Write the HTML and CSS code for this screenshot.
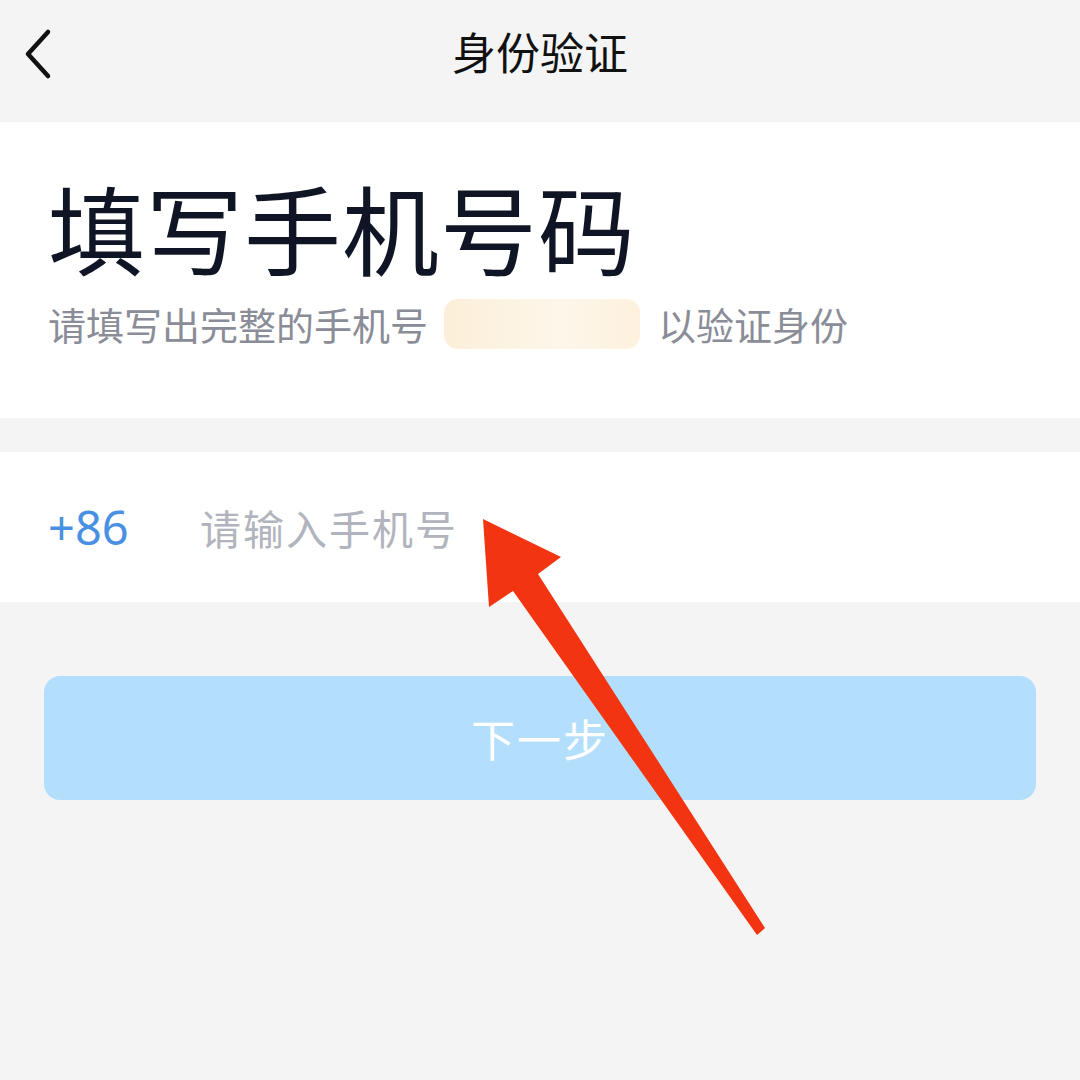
FILE: index.html
```html
<!DOCTYPE html>
<html lang="zh-CN">
<head>
<meta charset="utf-8">
<link rel="stylesheet" href="styles.css">
</head>
<body>
<div class="page">
  <header class="nav">
    <svg class="back" width="30" height="52" viewBox="0 0 30 52"><polyline points="24,4 4,26 24,48" fill="none" stroke="#111" stroke-width="4.5" stroke-linecap="round" stroke-linejoin="round"/></svg>
    <div class="nav-title">身份验证</div>
  </header>
  <section class="intro">
    <h1 class="title">填写手机号码</h1>
    <p class="sub">请填写出完整的手机号<span class="mask"></span>以验证身份</p>
  </section>
  <section class="phone-row">
    <span class="code">+86</span>
    <span class="placeholder">请输入手机号</span>
  </section>
  <div class="actions">
    <button class="next">下一步</button>
  </div>
  <svg class="arrow" width="1080" height="1080" viewBox="0 0 1080 1080">
    <polygon points="483,519 561,557 538,574 765,928 757,935 513,591 489,607" fill="#f23411"/>
  </svg>
</div>
</body>
</html>
```
FILE: styles.css
```css
html, body {
  margin: 0;
  padding: 0;
  background: #f4f4f4;
}
body {
  font-family: "Noto Sans CJK SC", "Noto Sans", sans-serif;
}
.page {
  position: relative;
  width: 1080px;
  height: 1080px;
  overflow: hidden;
  background: #f4f4f4;
}
.nav {
  position: relative;
  height: 122px;
  display: flex;
  align-items: flex-start;
  justify-content: center;
}
.back {
  position: absolute;
  left: 24px;
  top: 28px;
}
.nav-title {
  margin-top: 19px;
  font-size: 44px;
  line-height: 64px;
  color: #111;
}
.intro {
  background: #fff;
  height: 296px;
  padding: 0 48px;
  box-sizing: border-box;
}
.title {
  margin: 0;
  padding-top: 44px;
  font-size: 97px;
  line-height: 120px;
  font-weight: 400;
  color: #0f1524;
  letter-spacing: 1px;
}
.sub {
  margin: 10px 0 0;
  font-size: 38px;
  line-height: 56px;
  color: #8a8d97;
  display: flex;
  align-items: center;
}
.mask {
  display: inline-block;
  width: 196px;
  height: 50px;
  margin: 0 18px 0 16px;
  border-radius: 14px;
  background: linear-gradient(90deg, #fcefd9, #fdf6ea 60%, #fdf1de);
}
.phone-row {
  margin-top: 34px;
  height: 150px;
  background: #fff;
  display: flex;
  align-items: center;
  padding: 0 48px;
  box-sizing: border-box;
}
.code {
  font-family: "Noto Sans", sans-serif;
  font-size: 47px;
  color: #4a90e2;
  width: 152px;
}
.placeholder {
  font-size: 41px;
  color: #b2b4bd;
  letter-spacing: 2px;
}
.actions {
  padding: 74px 44px 0;
}
.next {
  display: block;
  width: 992px;
  height: 124px;
  border: none;
  border-radius: 16px;
  background: #b3dffd;
  color: #fff;
  font-family: "Noto Sans CJK SC", sans-serif;
  font-size: 44px;
  letter-spacing: 2px;
}
.arrow {
  position: absolute;
  left: 0;
  top: 0;
  pointer-events: none;
}
```
